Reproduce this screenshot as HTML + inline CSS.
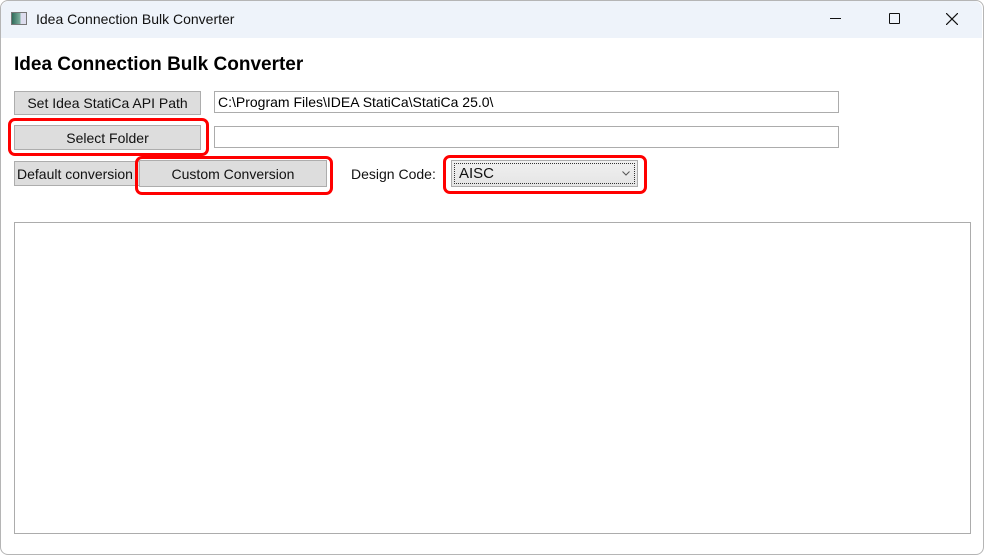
<!DOCTYPE html>
<html><head><style>
body{margin:0;width:984px;height:555px;background:#fff;font-family:"Liberation Sans",sans-serif;position:relative;overflow:hidden}
.a{position:absolute;box-sizing:border-box}
.btn{background:#dddddd;border:1px solid #adadad;font-size:14px;color:#111;text-align:center;line-height:23px;white-space:nowrap;overflow:hidden}
.tb{border:1px solid #acacac;background:#fff;font-size:14px;line-height:20px;padding-left:3px}
.red{border:3px solid #f00;border-radius:7px}
</style></head><body>
<div class="a" style="left:0;top:0;width:984px;height:555px;border:1px solid #b5b5b5;border-radius:8px"></div>
<div class="a" style="left:1px;top:1px;width:981px;height:37px;background:#eef3fa;border-radius:8px 8px 0 0"></div>
<div class="a" style="left:11px;top:12px;width:16px;height:13px;border:1px solid #777;background:linear-gradient(90deg,#2f6b5a,#7fb1a0 60%,#dde 61%)"></div>
<div class="a" style="left:36px;top:11px;font-size:14px;color:#111">Idea Connection Bulk Converter</div>
<div class="a" style="left:830px;top:18px;width:11px;height:1px;background:#111"></div>
<div class="a" style="left:889px;top:13px;width:11px;height:11px;border:1px solid #111;border-radius:1px"></div>
<svg class="a" style="left:946px;top:13px" width="12" height="12"><path d="M0 0L12 12M12 0L0 12" stroke="#111" stroke-width="1.2"/></svg>
<div class="a" style="left:14px;top:54px;font-size:19px;font-weight:bold;color:#000">Idea Connection Bulk Converter</div>
<div class="a btn" style="left:14px;top:91px;width:187px;height:24px">Set Idea StatiCa API Path</div>
<div class="a tb" style="left:214px;top:91px;width:625px;height:22px">C:\Program Files\IDEA StatiCa\StatiCa 25.0\</div>
<div class="a red" style="left:8px;top:118px;width:201px;height:38px"></div>
<div class="a btn" style="left:14px;top:125px;width:187px;height:25px;line-height:24px">Select Folder</div>
<div class="a tb" style="left:214px;top:126px;width:625px;height:22px"></div>
<div class="a btn" style="left:14px;top:161px;width:130px;height:25px;text-align:left;padding-left:2px;line-height:24px">Default conversion</div>
<div class="a red" style="left:135px;top:156px;width:198px;height:39px"></div>
<div class="a btn" style="left:139px;top:160px;width:188px;height:27px;line-height:26px">Custom Conversion</div>
<div class="a" style="left:351px;top:166px;font-size:14px;color:#111">Design Code:</div>
<div class="a red" style="left:443px;top:155px;width:204px;height:39px"></div>
<div class="a" style="left:451px;top:160px;width:187px;height:27px;border:1px solid #acacac;background:linear-gradient(#f0f0f0,#e5e5e5)"></div>
<div class="a" style="left:454px;top:163px;width:181px;height:21px;border:1px dotted #333"></div>
<div class="a" style="left:459px;top:165px;font-size:15px;color:#111">AISC</div>
<svg class="a" style="left:622px;top:171px" width="8" height="5"><path d="M0.5 0.5L4 4L7.5 0.5" stroke="#555" fill="none"/></svg>
<div class="a" style="left:14px;top:222px;width:957px;height:312px;border:1px solid #acacac"></div>
</body></html>
